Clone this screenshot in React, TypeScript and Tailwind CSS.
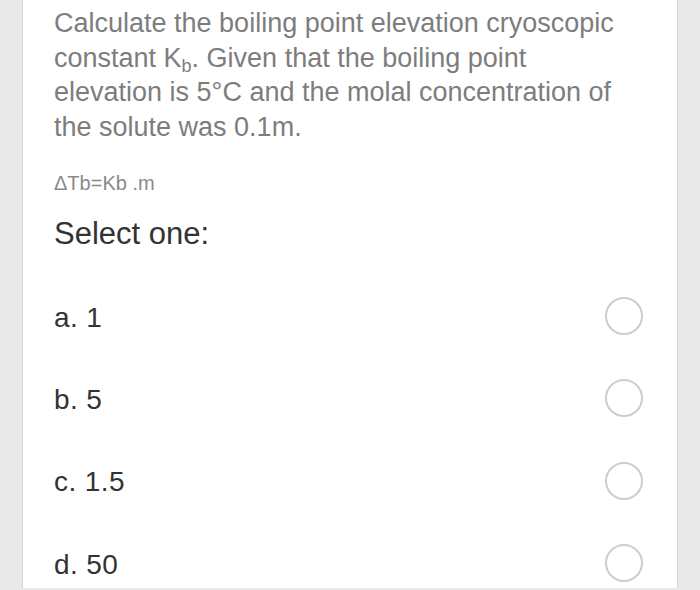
const options = ["a. 1", "b. 5", "c. 1.5", "d. 50"];

export default function App() {
  return (
    <div className="h-[590px] w-[700px] overflow-hidden bg-[#e9e9e9] px-[22px] font-['Liberation_Sans',Arial,sans-serif]">
      <div className="h-[588px] border-x border-[#d6d6d6] bg-white pl-[31px] pr-[34px] pt-[6px]">
        <p className="w-[570px] text-[27px] leading-[34.5px] text-[#7d7d7d]">
          Calculate the boiling point elevation cryoscopic constant K
          <span className="inline-block translate-y-[5px] text-[18px] leading-[18px]">b</span>. Given that the boiling point
          elevation is 5°C and the molal concentration of the solute was 0.1m.
        </p>
        <div className="mt-[27px] text-[20px] leading-[24px] text-[#8a8a8a]">ΔTb=Kb .m</div>
        <div className="mt-[21px] text-[31px] leading-[36px] text-[#333333]">Select one:</div>
        <div className="mt-[23px] flex flex-col">
          {options.map((o) => (
            <div key={o} className="flex h-[82.3px] items-center justify-between">
              <span className="pt-[3px] text-[28px] leading-[28px] tracking-[0.4px] text-[#333333]">{o}</span>
              <span className="h-[38px] w-[38px] rounded-full border-2 border-[#cdcdcd]" />
            </div>
          ))}
        </div>
      </div>
    </div>
  );
}
